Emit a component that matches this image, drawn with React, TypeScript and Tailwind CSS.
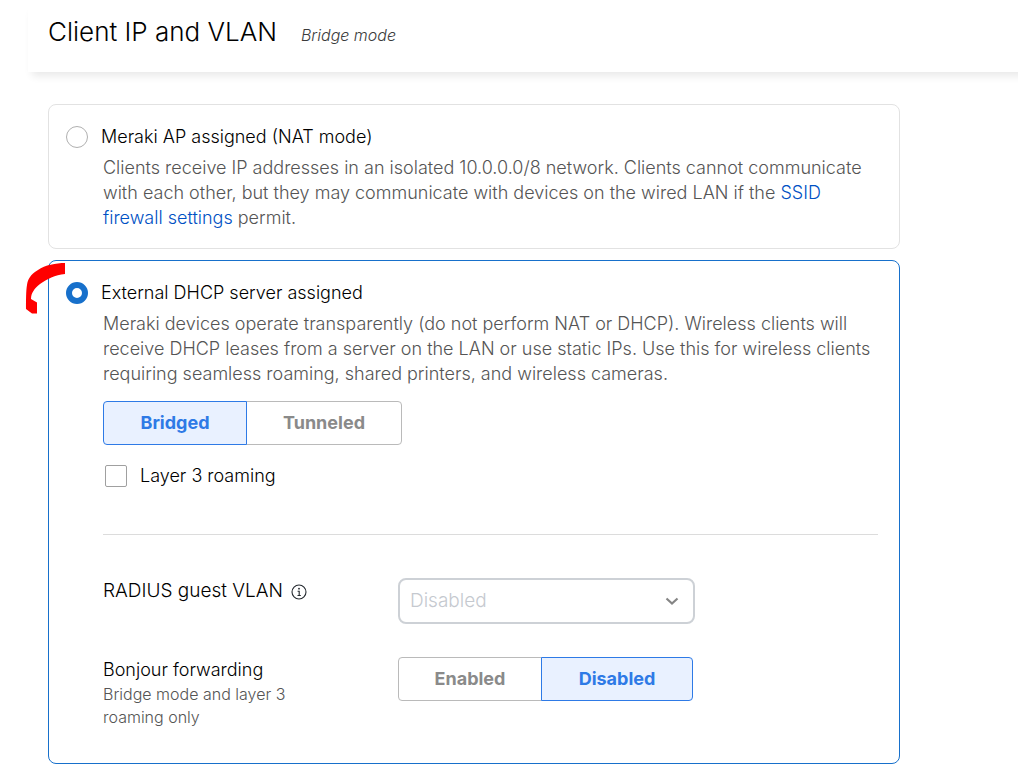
import { useState } from "react";
import type { ReactNode } from "react";

type SegmentedProps = {
  label: string;
  options: { text: string; width: string }[];
  initial: number;
};

function Segmented({ label, options, initial }: SegmentedProps) {
  const [active, setActive] = useState(initial);
  return (
    <div role="group" aria-label={label} className="flex">
      {options.map((option, i) => (
        <button
          key={option.text}
          type="button"
          aria-pressed={active === i}
          onClick={() => setActive(i)}
          className={`${option.width} h-11 border text-lg font-bold ${i > 0 ? "-ml-px rounded-r-sm" : "rounded-l-sm"} ${
            active === i
              ? "z-10 border-[#2e7ae6] bg-[#e9f1ff] text-[#2e7ae6]"
              : "border-[#bababa] bg-white text-[#8a8a8a]"
          }`}
        >
          {option.text}
        </button>
      ))}
    </div>
  );
}

type ModeCardProps = {
  id: string;
  title: string;
  selected: boolean;
  onSelect: () => void;
  description: ReactNode;
  children?: ReactNode;
};

function ModeCard({ id, title, selected, onSelect, description, children }: ModeCardProps) {
  return (
    <section
      className={`rounded-lg border bg-white px-[17px] pt-[19px] ${selected ? "border-[#1770cb] pb-[34px]" : "border-[#e2e2e2] pb-[18px]"}`}
    >
      <div className="flex items-center gap-[13px]">
        <input
          id={id}
          type="radio"
          name="mode"
          checked={selected}
          onChange={onSelect}
          className="size-[22px] shrink-0 appearance-none rounded-full border border-[#b0b0b0] bg-white checked:border-[6px] checked:border-[#1770cb]"
        />
        <label htmlFor={id} className="text-lg leading-[26px] font-light text-black">
          {title}
        </label>
      </div>
      <div className="pl-[37px]">
        <p className="mt-[5px] max-w-[770px] text-lg leading-[25px] font-light text-[#555555]">{description}</p>
        {children}
      </div>
    </section>
  );
}

export default function App() {
  const [mode, setMode] = useState("external");
  return (
    <div className="min-h-screen overflow-x-hidden bg-white font-['Inter',sans-serif]">
      <header className="-mr-4 ml-7 flex items-baseline gap-6 pt-[13px] pb-[22px] pl-5 shadow-[0_8px_8px_-4px_rgba(0,0,0,0.09)]">
        <h1 className="text-[26px] leading-[37px] font-light text-black">Client IP and VLAN</h1>
        <span className="text-base font-light text-[#3b3b3b] italic">Bridge mode</span>
      </header>
      <main className="flex max-w-[900px] flex-col gap-[11px] pt-8 pb-4 pl-12">
        <ModeCard
          id="nat"
          title="Meraki AP assigned (NAT mode)"
          selected={mode === "nat"}
          onSelect={() => setMode("nat")}
          description={
            <>
              Clients receive IP addresses in an isolated 10.0.0.0/8 network. Clients cannot communicate with each
              other, but they may communicate with devices on the wired LAN if the{" "}
              <a href="#firewall" className="text-[#0051c4]">
                SSID firewall settings
              </a>{" "}
              permit.
            </>
          }
        />
        <div className="relative">
          <svg className="absolute top-[2px] -left-[23px] z-10 h-[52px] w-[42px]" viewBox="0 0 42 52" fill="#ff0000" aria-hidden="true">
            <path d="M40 1C31 1 20 3 13 8C5 13 3 17 2 23C1 28 1 39 1 47L7 51.5H12V40.5L6 37C6 31 9 27 15 22C22 17 30 13 40 12Z" />
          </svg>
          <ModeCard
            id="external"
            title="External DHCP server assigned"
            selected={mode === "external"}
            onSelect={() => setMode("external")}
            description="Meraki devices operate transparently (do not perform NAT or DHCP). Wireless clients will receive DHCP leases from a server on the LAN or use static IPs. Use this for wireless clients requiring seamless roaming, shared printers, and wireless cameras."
          >
            <div className="mt-[15px]">
              <Segmented
                label="Traffic mode"
                options={[
                  { text: "Bridged", width: "w-36" },
                  { text: "Tunneled", width: "w-[156px]" },
                ]}
                initial={0}
              />
            </div>
            <div className="mt-[18px] flex items-center gap-[13px] pl-0.5">
              <input id="roaming" type="checkbox" className="size-[22px] appearance-none rounded-xs border border-[#a0a0a0] bg-white checked:bg-[#1770cb]" />
              <label htmlFor="roaming" className="text-lg leading-[26px] font-light text-black">
                Layer 3 roaming
              </label>
            </div>
            <hr className="mt-[45px] mr-1 border-[#dcdcdc]" />
            <div className="mt-[43px] flex">
              <div className="flex h-[26px] w-[295px] items-center gap-2">
                <label htmlFor="guest" className="text-[19px] font-light text-black">
                  RADIUS guest VLAN
                </label>
                <svg className="mt-0.5 size-4" viewBox="0 0 16 16" fill="none" stroke="#23282e" aria-hidden="true">
                  <circle cx="8" cy="8" r="7" strokeWidth="1.1" />
                  <path d="M6.6 7.2H8.2V11.2M6.5 11.5H9.8" strokeWidth="1.1" />
                  <circle cx="8" cy="4.7" r=".9" fill="#23282e" stroke="none" />
                </svg>
              </div>
              <div className="relative w-[297px]">
                <select id="guest" disabled className="h-[46px] w-full appearance-none rounded-lg border-2 border-[#cdd1d6] bg-white px-2.5 text-[19px] font-light text-[#c5c9cf] opacity-100">
                  <option>Disabled</option>
                </select>
                <svg className="pointer-events-none absolute top-[18px] right-4 h-2.5 w-3.5" viewBox="0 0 14 10" fill="none" stroke="#858585" strokeWidth="2.2" aria-hidden="true">
                  <path d="M1.5 2.5L7 7.5L12.5 2.5" />
                </svg>
              </div>
            </div>
            <div className="mt-[33px] flex">
              <div className="w-[295px]">
                <div className="text-lg leading-[26px] font-light text-black">Bonjour forwarding</div>
                <p className="w-[210px] text-base leading-[23px] font-light text-[#555555]">Bridge mode and layer 3 roaming only</p>
              </div>
              <Segmented
                label="Bonjour forwarding"
                options={[
                  { text: "Enabled", width: "w-36" },
                  { text: "Disabled", width: "w-[152px]" },
                ]}
                initial={1}
              />
            </div>
          </ModeCard>
        </div>
      </main>
    </div>
  );
}
